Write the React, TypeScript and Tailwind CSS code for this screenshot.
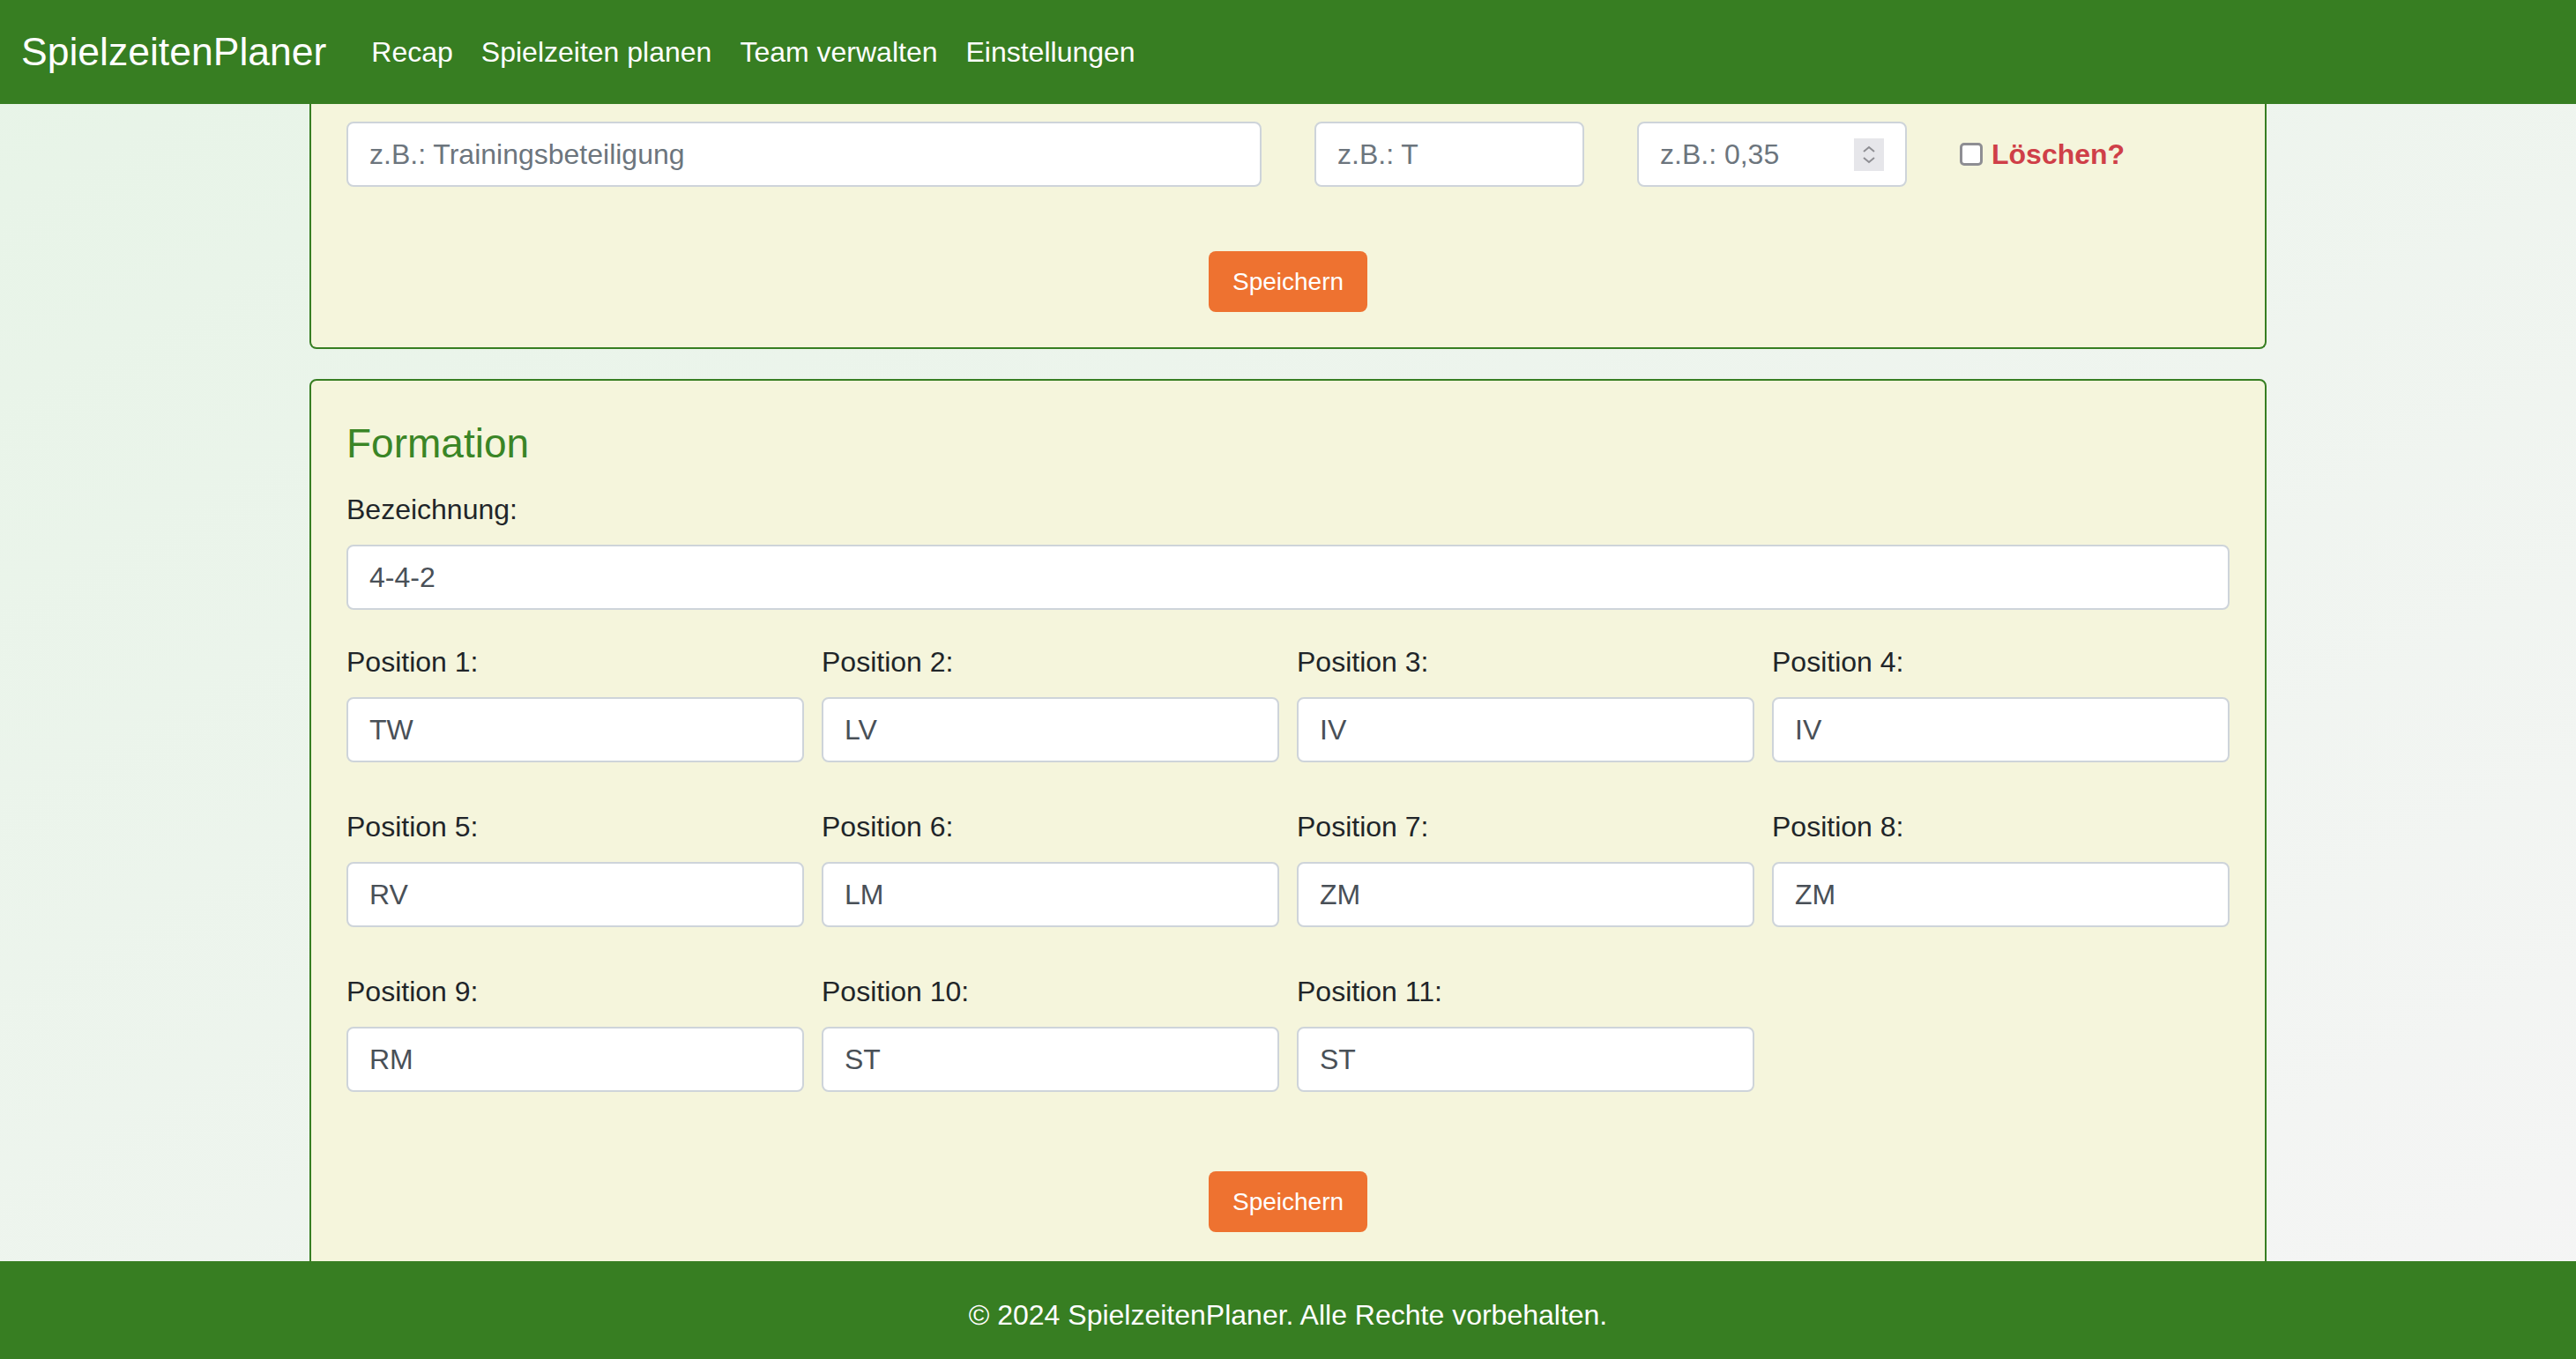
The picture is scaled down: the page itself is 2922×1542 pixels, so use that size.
import React from "react";

const positions = ["TW", "LV", "IV", "IV", "RV", "LM", "ZM", "ZM", "RM", "ST", "ST"];

const inputCls =
  "w-full h-[74px] rounded-[8px] border-2 border-[#ced4da] bg-white px-[24px] text-[32px] text-[#495057] placeholder:text-[#6c757d] outline-none";

const labelCls = "block mb-[16px] text-[32px] leading-[48px] text-[#212529]";

const SaveButton: React.FC = () => (
  <div className="flex justify-center">
    <button
      type="button"
      className="h-[69px] w-[180px] rounded-[8px] bg-[#ee7230] text-[28px] text-white flex items-center justify-center"
    >
      Speichern
    </button>
  </div>
);

const App: React.FC = () => {
  return (
    <div className="h-screen flex flex-col bg-linear-to-br from-[#e7f4e7] to-[#f5f5f5] font-['Liberation_Sans',Arial,sans-serif]">
      <nav className="h-[118px] shrink-0 bg-[#377e22] flex items-center px-[24px]">
        <span className="text-[44.5px] text-white mr-[35px]">SpielzeitenPlaner</span>
        <div className="flex items-center">
          {["Recap", "Spielzeiten planen", "Team verwalten", "Einstellungen"].map((l) => (
            <a key={l} href="#" className="px-[16px] text-[32px] text-white">
              {l}
            </a>
          ))}
        </div>
      </nav>

      <main className="flex-1 overflow-hidden">
        <div className="w-[2220px] mx-auto">
          {/* card scrolled partly under the header */}
          <div className="bg-[#f5f5dc] border-x-2 border-b-2 border-[#377e22] rounded-b-[8px] px-[40px] pt-[20px] pb-[40px]">
            <div className="grid grid-cols-12 gap-x-[60px] items-center">
              <input className={`${inputCls} col-span-6`} placeholder="z.B.: Trainingsbeteiligung" />
              <input className={`${inputCls} col-span-2`} placeholder="z.B.: T" />
              <div className="col-span-2 h-[74px] rounded-[8px] border-2 border-[#ced4da] bg-white pl-[24px] pr-[24px] flex items-center">
                <input
                  className="flex-1 min-w-0 bg-transparent text-[32px] text-[#495057] placeholder:text-[#6c757d] outline-none"
                  placeholder="z.B.: 0,35"
                />
                <svg width="34" height="37" viewBox="0 0 34 37" className="shrink-0">
                  <rect width="34" height="37" fill="#e6e6ea" />
                  <path d="M11 15 L17 10 L23 15" stroke="#8e8e93" strokeWidth="2" fill="none" />
                  <path d="M11 22 L17 27 L23 22" stroke="#8e8e93" strokeWidth="2" fill="none" />
                </svg>
              </div>
              <label className="col-span-2 flex items-center">
                <span className="w-[26px] h-[26px] border-[3px] border-[#8e8e93] rounded-[5px] bg-white" />
                <span className="ml-[10px] text-[32px] font-bold text-[#cf3f48]">Löschen?</span>
              </label>
            </div>
            <div className="mt-[73px]">
              <SaveButton />
            </div>
          </div>

          <div className="mt-[34px] bg-[#f5f5dc] border-2 border-[#377e22] rounded-[8px] px-[40px] pt-[40px] pb-[40px]">
            <h4 className="text-[46px] leading-[62px] text-[#3a8526] mb-[20px]">Formation</h4>
            <div className="mb-[35px]">
              <label className={labelCls}>Bezeichnung:</label>
              <input className={inputCls} defaultValue="4-4-2" />
            </div>
            <div className="grid grid-cols-4 gap-x-[20px] gap-y-[49px]">
              {positions.map((p, i) => (
                <div key={i}>
                  <label className={labelCls}>Position {i + 1}:</label>
                  <input className={inputCls} defaultValue={p} />
                </div>
              ))}
            </div>
            <div className="mt-[90px]">
              <SaveButton />
            </div>
          </div>
        </div>
      </main>

      <footer className="h-[111px] shrink-0 bg-[#377e22] flex items-center justify-center pt-[10px] text-[32px] text-white">
        © 2024 SpielzeitenPlaner. Alle Rechte vorbehalten.
      </footer>
    </div>
  );
};

export default App;
